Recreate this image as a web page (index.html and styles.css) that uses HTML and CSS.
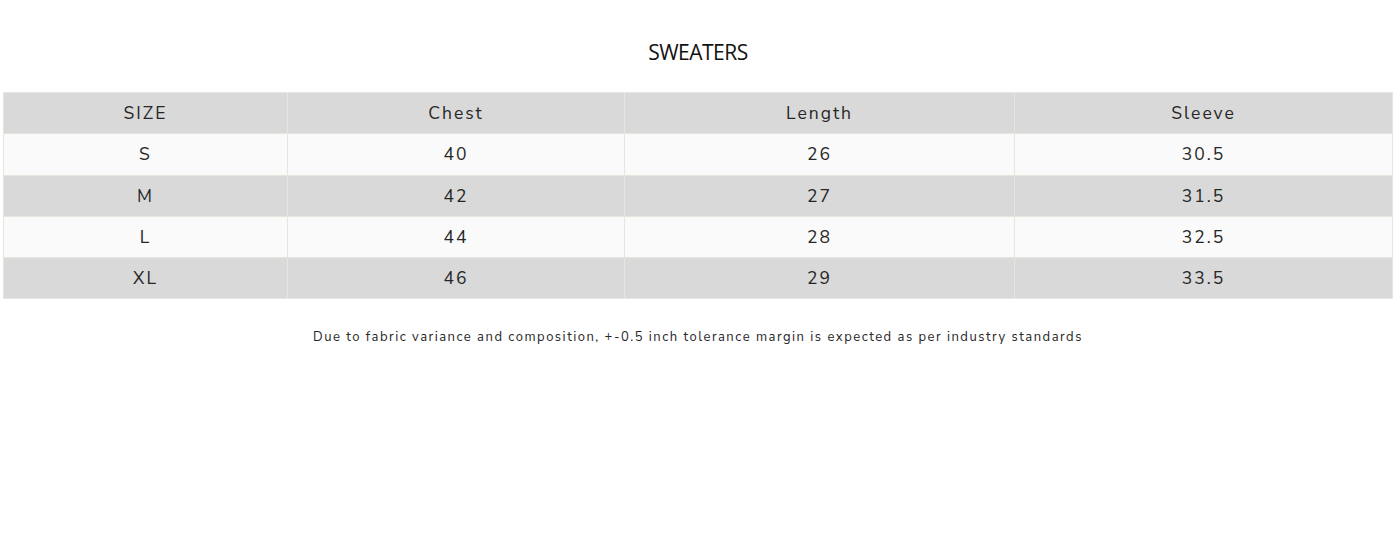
FILE: index.html
```html
<!DOCTYPE html>
<html>
<head>
<meta charset="utf-8">
<link rel="stylesheet" href="styles.css">
</head>
<body>
<div class="page">
  <h2 class="title">SWEATERS</h2>
  <table class="chart">
    <colgroup>
      <col class="c1"><col class="c2"><col class="c3"><col class="c4">
    </colgroup>
    <tr class="dark"><td>SIZE</td><td>Chest</td><td>Length</td><td>Sleeve</td></tr>
    <tr class="light"><td>S</td><td>40</td><td>26</td><td>30.5</td></tr>
    <tr class="dark"><td>M</td><td>42</td><td>27</td><td>31.5</td></tr>
    <tr class="light"><td>L</td><td>44</td><td>28</td><td>32.5</td></tr>
    <tr class="dark"><td>XL</td><td>46</td><td>29</td><td>33.5</td></tr>
  </table>
  <p class="note">Due to fabric variance and composition, +-0.5 inch tolerance margin is expected as per industry standards</p>
</div>
</body>
</html>
```
FILE: styles.css
```css
html, body {
  margin: 0;
  padding: 0;
  background: #ffffff;
}
.page {
  padding: 0 7px 0 3px;
  font-family: "Nunito Sans", Lato, "Open Sans", sans-serif;
  color: #1f1f1f;
}
.title {
  margin: 0 0 27px;
  padding-top: 39px;
  text-align: center;
  font-family: "Open Sans", sans-serif;
  font-weight: 400;
  font-size: 21px;
  line-height: 26px;
  letter-spacing: -0.5px;
  color: #121212;
}
.chart {
  width: 1389px;
  border-collapse: collapse;
  table-layout: fixed;
  border: 1px solid #e6e6df;
}
.c1 { width: 284px; }
.c2 { width: 337px; }
.c3 { width: 390px; }
.c4 { width: 378px; }
.chart td {
  border: 1px solid #e6e6df;
  height: 41.3px;
  padding: 0;
  box-sizing: border-box;
  text-align: center;
  vertical-align: middle;
  font-size: 17.5px;
  letter-spacing: 2px;
  color: #262626;
}
.dark td { background: #d9d9d9; }
.light td { background: #fafafa; }
.note {
  margin: 29px 0 0;
  text-align: center;
  font-size: 13px;
  line-height: 18px;
  letter-spacing: 1.5px;
  color: #262626;
}
```
